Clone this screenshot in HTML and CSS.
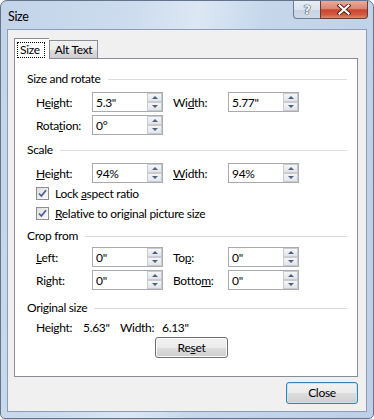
FILE: index.html
```html
<!DOCTYPE html>
<html>
<head>
  <title>Size</title>
  <link rel="stylesheet" href="styles.css">
</head>
<body>
  <div class="window">
    <div class="titlebar">
      <span class="title">Size</span>
      <div class="caption-buttons">
        <div class="help-btn">?</div>
        <div class="close-btn">
          <svg width="14" height="11" viewBox="0 0 14 11">
            <path d="M2.5 1.5 L11.5 9.5 M11.5 1.5 L2.5 9.5" stroke="#4b1f18" stroke-width="4" stroke-linecap="square" fill="none"/>
            <path d="M2.5 1.5 L11.5 9.5 M11.5 1.5 L2.5 9.5" stroke="#fff" stroke-width="2.2" stroke-linecap="square" fill="none"/>
          </svg>
        </div>
      </div>
    </div>

    <div class="client">
      <div class="tabs">
        <div class="tab active"><span class="focus">Size</span></div>
        <div class="tab">Alt Text</div>
      </div>

      <div class="pane">
        <div class="section sec-size">
          <div class="heading"><span>Size and rotate</span><div class="rule"></div></div>
          <div class="grid">
            <label>H<u>e</u>ight:</label>
            <div class="spin"><span>5.3"</span><div class="arrows"><i class="up"></i><i class="down"></i></div></div>
            <label>Wi<u>d</u>th:</label>
            <div class="spin"><span>5.77"</span><div class="arrows"><i class="up"></i><i class="down"></i></div></div>
            <label>Rota<u>t</u>ion:</label>
            <div class="spin"><span>0°</span><div class="arrows"><i class="up"></i><i class="down"></i></div></div>
          </div>
        </div>

        <div class="section sec-scale">
          <div class="heading"><span>Scale</span><div class="rule"></div></div>
          <div class="grid">
            <label><u>H</u>eight:</label>
            <div class="spin"><span>94%</span><div class="arrows"><i class="up"></i><i class="down"></i></div></div>
            <label><u>W</u>idth:</label>
            <div class="spin"><span>94%</span><div class="arrows"><i class="up"></i><i class="down"></i></div></div>
          </div>
          <div class="check-row">
            <span class="checkbox">
              <svg width="9" height="9" viewBox="0 0 9 9"><path d="M1 4.5 L3.4 7 L8 1.2" stroke="#4a5e94" stroke-width="1.7" fill="none"/></svg>
            </span>
            <span>Lock <u>a</u>spect ratio</span>
          </div>
          <div class="check-row">
            <span class="checkbox">
              <svg width="9" height="9" viewBox="0 0 9 9"><path d="M1 4.5 L3.4 7 L8 1.2" stroke="#4a5e94" stroke-width="1.7" fill="none"/></svg>
            </span>
            <span><u>R</u>elative to original picture size</span>
          </div>
        </div>

        <div class="section sec-crop">
          <div class="heading"><span>Crop from</span><div class="rule"></div></div>
          <div class="grid">
            <label><u>L</u>eft:</label>
            <div class="spin"><span>0"</span><div class="arrows"><i class="up"></i><i class="down"></i></div></div>
            <label>To<u>p</u>:</label>
            <div class="spin"><span>0"</span><div class="arrows"><i class="up"></i><i class="down"></i></div></div>
            <label>Ri<u>g</u>ht:</label>
            <div class="spin"><span>0"</span><div class="arrows"><i class="up"></i><i class="down"></i></div></div>
            <label>Botto<u>m</u>:</label>
            <div class="spin"><span>0"</span><div class="arrows"><i class="up"></i><i class="down"></i></div></div>
          </div>
        </div>

        <div class="section sec-orig">
          <div class="heading"><span>Original size</span><div class="rule"></div></div>
          <div class="orig-row">
            <span class="o-label">Height:</span>
            <span class="o-value">5.63"</span>
            <span class="o-label2">Width:</span>
            <span>6.13"</span>
          </div>
          <button class="btn reset-btn">Re<u>s</u>et</button>
        </div>
      </div>

      <div class="footer">
        <button class="btn default-btn">Close</button>
      </div>
    </div>
  </div>
</body>
</html>
```

FILE: styles.css
```css
html, body {
  margin: 0;
  background-color: #fff;
}
body {
  font-family: Lato, "Noto Sans", sans-serif;
  font-size: 12px;
  letter-spacing: -0.3px;
  color: #000;
}
.window {
  width: 374px;
  height: 419px;
  box-sizing: border-box;
  border: 1px solid #64758b;
  border-radius: 7px 7px 5px 5px;
  background: linear-gradient(100deg, #c3d4e9 0%, #cddcee 30%, #dce7f3 45%, #c6d7eb 60%, #bdd0e7 100%);
  display: flex;
  flex-direction: column;
  overflow: hidden;
}
.titlebar {
  height: 28px;
  display: flex;
  justify-content: space-between;
  align-items: flex-start;
}
.title {
  margin: 8px 0 0 7px;
  line-height: 16px;
  font-size: 12.5px;
}
.caption-buttons {
  display: flex;
  margin-right: 5px;
}
.help-btn {
  width: 27px;
  height: 18px;
  box-sizing: border-box;
  border: 1px solid #6d7c91;
  border-top: none;
  border-right: none;
  border-radius: 0 0 0 4px;
  background: linear-gradient(to bottom, #e9eef5 0%, #dbe3ee 50%, #c7d3e3 51%, #cfdae9 100%);
  text-align: center;
  font-family: "DejaVu Sans", sans-serif;
  font-size: 13px;
  font-weight: bold;
  line-height: 17px;
  color: #eef2f7;
  text-shadow: 0 0 1px #3d4a5c, 0 0 1px #3d4a5c, 0 0 1px #3d4a5c;
}
.close-btn {
  width: 48px;
  height: 18px;
  box-sizing: border-box;
  border: 1px solid #6b3a32;
  border-top: none;
  border-radius: 0 0 4px 0;
  background: linear-gradient(to bottom, #e8ab9b 0%, #dc8672 45%, #c9452f 52%, #d4583f 80%, #e08a6a 100%);
  display: flex;
  justify-content: center;
  align-items: center;
}
.client {
  flex: 1;
  margin: 0 6px 6px 6px;
  border: 1px solid #8d9db3;
  background-color: #f0f0f0;
  padding: 8px 0 0 6px;
}
.tabs {
  display: flex;
  align-items: flex-end;
  height: 20px;
  position: relative;
  z-index: 1;
}
.tab {
  height: 18px;
  width: 49px;
  box-sizing: border-box;
  border: 1px solid #898c95;
  border-bottom: none;
  text-align: center;
  line-height: 17px;
  background: linear-gradient(to bottom, #f2f2f2 0%, #ebebeb 50%, #dddddd 51%, #cfcfcf 100%);
}
.tab.active {
  height: 21px;
  margin-bottom: -1px;
  background: #fff;
  padding: 2px 3px 0 2px;
  border-right: none;
  width: 35px;
  text-align: left;
}
.focus {
  display: inline-block;
  border: 1px dotted #000;
  padding: 0 2px;
  width: 28px;
  box-sizing: border-box;
  line-height: 14px;
}
.pane {
  width: 344px;
  height: 319px;
  box-sizing: border-box;
  border: 1px solid #898c95;
  background-color: #fff;
  padding: 12px 10px 0 12px;
}
.heading {
  display: flex;
  align-items: center;
  line-height: 16px;
}
.rule {
  flex: 1;
  height: 1px;
  margin-left: 7px;
  background-color: #dcdcdc;
}
.grid {
  display: grid;
  grid-template-columns: 56px 81px 55px 71px;
  grid-auto-rows: 20px;
  row-gap: 3px;
  margin-left: 9px;
  align-items: center;
}
.spin {
  width: 71px;
  height: 20px;
  box-sizing: border-box;
  border: 1px solid #a9abb2;
  display: flex;
  align-items: center;
  padding: 0 0 0 3px;
}
.spin span {
  flex: 1;
}
.arrows {
  width: 15px;
  height: 18px;
  display: flex;
  flex-direction: column;
}
.arrows i {
  flex: 1;
  box-sizing: border-box;
  border: 1px solid #c9cbd0;
  background: linear-gradient(to bottom, #f6f6f6, #e2e4e8);
  display: flex;
  justify-content: center;
  align-items: center;
}
.arrows i::after {
  content: "";
  width: 0;
  height: 0;
  border-left: 3px solid transparent;
  border-right: 3px solid transparent;
}
.arrows .up::after {
  border-bottom: 3px solid #4d6082;
}
.arrows .down::after {
  border-top: 3px solid #4d6082;
}
.sec-size .grid {
  margin-top: 5px;
}
.sec-scale {
  margin-top: 7px;
}
.sec-scale .grid {
  margin-top: 5px;
}
.check-row {
  display: flex;
  align-items: center;
  gap: 6px;
  height: 20px;
  margin-left: 9px;
}
.check-row:first-of-type {
  margin-top: 1px;
}
.checkbox {
  width: 13px;
  height: 13px;
  box-sizing: border-box;
  border: 1px solid #8e8f8f;
  background: linear-gradient(135deg, #dedede, #fbfbfb);
  display: flex;
  justify-content: center;
  align-items: center;
}
.sec-crop {
  margin-top: 5px;
}
.sec-crop .grid {
  margin-top: 3px;
}
.sec-orig {
  margin-top: 10px;
}
.orig-row {
  display: flex;
  margin: 4px 0 0 9px;
  line-height: 16px;
}
.o-label {
  width: 47px;
}
.o-value {
  width: 37px;
}
.o-label2 {
  width: 42px;
}
.btn {
  font-family: inherit;
  font-size: 12px;
  letter-spacing: -0.3px;
  color: #000;
  height: 21px;
  box-sizing: border-box;
  border: 1px solid #707070;
  border-radius: 3px;
  background: linear-gradient(to bottom, #f2f2f2 0%, #ebebeb 50%, #dddddd 51%, #cfcfcf 100%);
  box-shadow: inset 0 0 0 1px #fbfbfb;
  padding: 0;
  line-height: 18px;
}
.reset-btn {
  width: 73px;
  margin: 1px 0 0 128px;
}
.footer {
  width: 344px;
  display: flex;
  justify-content: flex-end;
  margin-top: 5px;
}
.default-btn {
  width: 72px;
  height: 22px;
  border-color: #3c7fb1;
  box-shadow: inset 0 0 0 1px #c4e5f6;
}
```
